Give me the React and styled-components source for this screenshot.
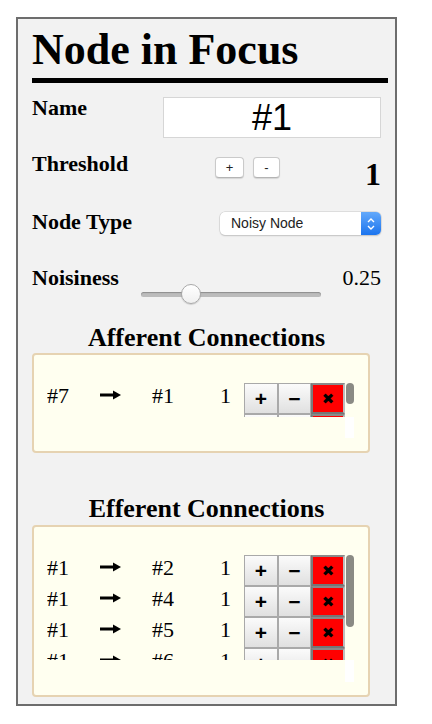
import React from 'react';
import styled, { createGlobalStyle } from 'styled-components';

const GlobalStyle = createGlobalStyle`
  body {
    margin: 0;
    background: #fff;
    font-family: "Liberation Serif", "Times New Roman", serif;
  }
`;

const Panel = styled.div`
  box-sizing: border-box;
  margin: 17px 0 0 16px;
  width: 381px;
  height: 689px;
  border: 2px solid #6d6d6d;
  background: #f2f2f2;
  padding: 0 7px 0 14px;
  color: #000;
`;

const Title = styled.h1`
  margin: 9px 0 0;
  padding-bottom: 6px;
  border-bottom: 5px solid #000;
  font-size: 44px;
  line-height: 1;
  font-weight: bold;
`;

const Fields = styled.div`
  width: 349px;
  margin-top: 14px;
`;

const Field = styled.div`
  display: grid;
  grid-template-columns: ${props => props.cols};
  align-items: start;
  height: ${props => props.h}px;
`;

const Label = styled.div`
  font-size: 22px;
  line-height: 1;
  font-weight: bold;
`;

const NameInput = styled.input`
  box-sizing: border-box;
  width: 218px;
  height: 41px;
  border: 1px solid #d6d6d6;
  background: #fff;
  font-family: "Liberation Sans", Arial, sans-serif;
  font-size: 36px;
  text-align: center;
  padding: 0;
  color: #000;
  outline: none;
`;

const SmallButtons = styled.div`
  display: flex;
  gap: 9px;
  margin-top: 4px;
`;

const SmallButton = styled.button`
  box-sizing: border-box;
  width: ${props => props.w}px;
  height: 21px;
  padding: 0;
  border: 1px solid #cacaca;
  border-bottom-color: #b4b4b4;
  border-radius: 4px;
  background: #fff;
  box-shadow: 0 1px 1px rgba(0, 0, 0, 0.12);
  font-family: "Liberation Sans", Arial, sans-serif;
  font-size: 13px;
  color: #222;
`;

const BigValue = styled.div`
  justify-self: end;
  margin-top: 5px;
  font-size: 32px;
  line-height: 1;
  font-weight: bold;
`;

const Value = styled.div`
  justify-self: end;
  font-size: 22px;
  line-height: 1;
`;

const Select = styled.div`
  box-sizing: border-box;
  display: flex;
  width: 161px;
  height: 23px;
  margin-top: 1px;
  border-radius: 5px;
  background: #fff;
  box-shadow: 0 0 0 0.5px #c9c9c9, 0 1px 1.5px rgba(0, 0, 0, 0.2);
  overflow: hidden;
  font-family: "Liberation Sans", Arial, sans-serif;
  font-size: 14px;
  color: #222;
`;

const SelectText = styled.span`
  flex: 1;
  padding-left: 11px;
  line-height: 23px;
`;

const SelectArrows = styled.span`
  display: flex;
  align-items: center;
  justify-content: center;
  width: 20px;
  background: linear-gradient(#63a9fb, #1b74ee);
`;

const Slider = styled.input`
  -webkit-appearance: none;
  appearance: none;
  width: 180px;
  height: 20px;
  margin: 17px 0 0;
  background: transparent;

  &::-webkit-slider-runnable-track {
    height: 5px;
    border-radius: 3px;
    background: #bcbcbc;
    box-shadow: inset 0 1px 1px rgba(0, 0, 0, 0.25);
  }

  &::-webkit-slider-thumb {
    -webkit-appearance: none;
    width: 20px;
    height: 20px;
    margin-top: -7.5px;
    border-radius: 50%;
    border: 1px solid #a9a9a9;
    background: linear-gradient(#ffffff, #f0f0f0);
    box-shadow: 0 1px 1px rgba(0, 0, 0, 0.15);
    box-sizing: border-box;
  }
`;

const SectionTitle = styled.h2`
  margin: ${props => props.top}px 0 0;
  font-size: 26px;
  line-height: 1;
  font-weight: bold;
  text-align: center;
`;

const ConnBox = styled.div`
  box-sizing: border-box;
  width: 338px;
  margin-top: ${props => props.top}px;
  padding: 28px 0 13px 13px;
  border: 2px solid #e6d3b2;
  border-radius: 4px;
  background: #fffff0;
`;

const ScrollArea = styled.div`
  display: grid;
  grid-template-columns: 298px 9px;
  grid-template-rows: ${props => props.h}px ${props => props.corner}px;
`;

const RowList = styled.div`
  overflow: hidden;
`;

const ScrollTrack = styled.div`
  padding-left: 1px;
`;

const Thumb = styled.div`
  width: 8px;
  height: ${props => props.h}px;
  border-radius: 4px;
  background: #8a8a84;
`;

const Corner = styled.div`
  grid-column: 2;
  background: #fff;
`;

const ConnRow = styled.div`
  display: grid;
  grid-template-columns: 53px 52px 68px 24px 101px;
  height: 31px;
`;

const Cell = styled.div`
  font-size: 22px;
  line-height: 25px;
`;

const ArrowCell = styled.div`
  padding-top: 7px;

  svg {
    display: block;
  }
`;

const ActionGroup = styled.div`
  display: flex;
`;

const ActionButton = styled.button`
  box-sizing: border-box;
  width: ${props => props.w}px;
  height: 31px;
  padding: 0;
  display: flex;
  align-items: center;
  justify-content: center;
  border: 1px solid #a9a9a9;
  background: linear-gradient(#fbfbfb, #e0e0e0);
  font-family: "Liberation Sans", Arial, sans-serif;
  font-weight: bold;
  font-size: 21px;
  color: #000;
`;

const RemoveButton = styled(ActionButton)`
  border-width: 2px;
  border-color: #8a8a8a #bdbdbd #767676 #7a7a7a;
  background: #ff0000;
  font-family: "DejaVu Sans", sans-serif;
  font-size: 15px;
`;

const Arrow = () => (
  <svg width="21" height="10" viewBox="0 0 21 10">
    <rect x="0" y="3.5" width="15" height="3" fill="#000" />
    <path d="M13 0.5 L21 5 L13 9.5 Z" fill="#000" />
  </svg>
);

const Chevrons = () => (
  <svg width="10" height="14" viewBox="0 0 10 14">
    <path d="M2 5 L5 2 L8 5" stroke="#fff" strokeWidth="1.4" fill="none" />
    <path d="M2 9 L5 12 L8 9" stroke="#fff" strokeWidth="1.4" fill="none" />
  </svg>
);

// second afferent row only peeks out below the scroll edge
const afferent = [{ from: '#7', to: '#1', weight: 1 }, null];

const efferent = [
  { from: '#1', to: '#2', weight: 1 },
  { from: '#1', to: '#4', weight: 1 },
  { from: '#1', to: '#5', weight: 1 },
  { from: '#1', to: '#6', weight: 1 }
];

const Connection = ({ conn }) => (
  <ConnRow>
    <Cell>{conn ? conn.from : ''}</Cell>
    <ArrowCell>{conn && <Arrow />}</ArrowCell>
    <Cell>{conn ? conn.to : ''}</Cell>
    <Cell>{conn ? conn.weight : ''}</Cell>
    <ActionGroup>
      <ActionButton w={34}>{conn && '+'}</ActionButton>
      <ActionButton w={33}>{conn && '−'}</ActionButton>
      <RemoveButton w={34}>{conn && '✖'}</RemoveButton>
    </ActionGroup>
  </ConnRow>
);

const Connections = ({ rows, height, corner, thumb }) => (
  <ScrollArea h={height} corner={corner}>
    <RowList>
      {rows.map((conn, i) => (
        <Connection key={i} conn={conn} />
      ))}
    </RowList>
    <ScrollTrack>
      <Thumb h={thumb} />
    </ScrollTrack>
    <Corner />
  </ScrollArea>
);

export default function App() {
  return (
    <>
      <GlobalStyle />
      <Panel>
        <Title>Node in Focus</Title>
        <Fields>
          <Field cols="131px 218px" h={56}>
            <Label>Name</Label>
            <NameInput defaultValue="#1" />
          </Field>
          <Field cols="183px 1fr auto" h={58}>
            <Label>Threshold</Label>
            <SmallButtons>
              <SmallButton w={29}>+</SmallButton>
              <SmallButton w={27}>-</SmallButton>
            </SmallButtons>
            <BigValue>1</BigValue>
          </Field>
          <Field cols="188px 161px" h={56}>
            <Label>Node Type</Label>
            <Select>
              <SelectText>Noisy Node</SelectText>
              <SelectArrows>
                <Chevrons />
              </SelectArrows>
            </Select>
          </Field>
          <Field cols="109px 180px 1fr" h={58}>
            <Label>Noisiness</Label>
            <Slider type="range" min="0" max="1" step="0.01" defaultValue="0.25" />
            <Value>0.25</Value>
          </Field>

          <SectionTitle top={0}>Afferent Connections</SectionTitle>
          <ConnBox top={2}>
            <Connections rows={afferent} height={34} corner={21} thumb={21} />
          </ConnBox>

          <SectionTitle top={43}>Efferent Connections</SectionTitle>
          <ConnBox top={3}>
            <Connections rows={efferent} height={105} corner={22} thumb={72} />
          </ConnBox>
        </Fields>
      </Panel>
    </>
  );
}
